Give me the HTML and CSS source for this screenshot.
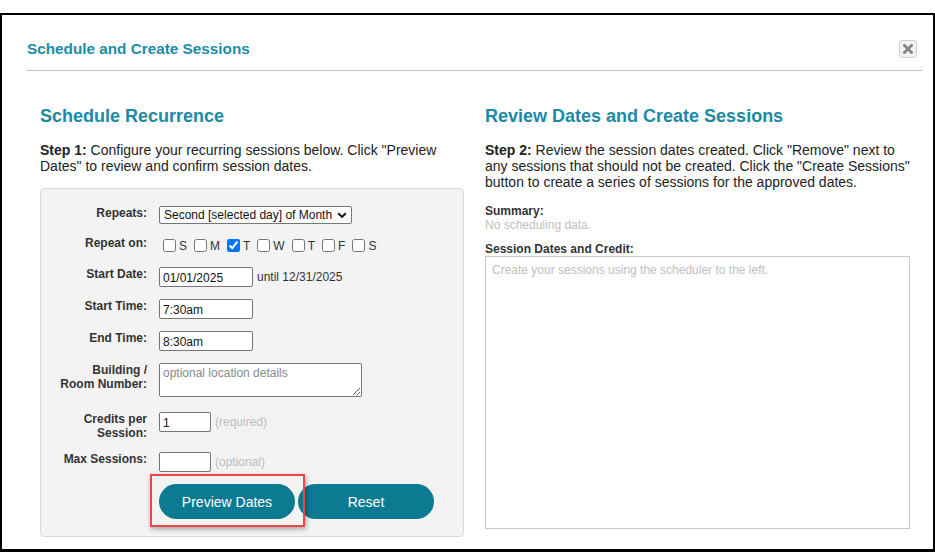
FILE: index.html
```html
<!DOCTYPE html>
<html>
<head>
<meta charset="utf-8">
<link rel="stylesheet" href="styles.css">
</head>
<body>
<div class="frame">
  <div class="modal-header">
    <div class="modal-title">Schedule and Create Sessions</div>
    <button class="close-btn" aria-label="Close">
      <svg width="10" height="10" viewBox="0 0 10 10"><path d="M1.5 1.5 L8.5 8.5 M8.5 1.5 L1.5 8.5" stroke="#858585" stroke-width="2.8" stroke-linecap="square"/></svg>
    </button>
  </div>
  <div class="columns">
    <div class="col col-left">
      <h2 class="col-heading">Schedule Recurrence</h2>
      <p class="step"><b>Step 1:</b> Configure your recurring sessions below. Click "Preview Dates" to review and confirm session dates.</p>
      <div class="panel">
        <div class="row">
          <label class="lbl">Repeats:</label>
          <div class="ctl">
            <div class="select-wrap">
              <select class="select"><option>Second [selected day] of Month</option></select>
              <svg class="chev" width="10" height="7" viewBox="0 0 10 7"><path d="M1.2 1.3 L5 5 L8.8 1.3" fill="none" stroke="#111" stroke-width="1.9"/></svg>
            </div>
          </div>
        </div>
        <div class="row row-days">
          <label class="lbl">Repeat on:</label>
          <div class="ctl days">
            <span class="day"><input type="checkbox"><span>S</span></span>
            <span class="day"><input type="checkbox"><span>M</span></span>
            <span class="day"><input type="checkbox" checked><span>T</span></span>
            <span class="day"><input type="checkbox"><span>W</span></span>
            <span class="day"><input type="checkbox"><span>T</span></span>
            <span class="day"><input type="checkbox"><span>F</span></span>
            <span class="day"><input type="checkbox"><span>S</span></span>
          </div>
        </div>
        <div class="row">
          <label class="lbl">Start Date:</label>
          <div class="ctl"><input class="txt txt-md" type="text" value="01/01/2025"><span class="after">until 12/31/2025</span></div>
        </div>
        <div class="row">
          <label class="lbl">Start Time:</label>
          <div class="ctl"><input class="txt txt-md" type="text" value="7:30am"></div>
        </div>
        <div class="row">
          <label class="lbl">End Time:</label>
          <div class="ctl"><input class="txt txt-md" type="text" value="8:30am"></div>
        </div>
        <div class="row row-area">
          <label class="lbl">Building /<br>Room Number:</label>
          <div class="ctl"><textarea class="area" placeholder="optional location details"></textarea></div>
        </div>
        <div class="row">
          <label class="lbl">Credits per<br>Session:</label>
          <div class="ctl"><input class="txt txt-sm" type="text" value="1"><span class="hint">(required)</span></div>
        </div>
        <div class="row">
          <label class="lbl">Max Sessions:</label>
          <div class="ctl"><input class="txt txt-sm" type="text" value=""><span class="hint">(optional)</span></div>
        </div>
        <div class="buttons">
          <div class="highlight-wrap">
            <button class="btn">Preview Dates</button>
            <span class="highlight"></span>
          </div>
          <button class="btn">Reset</button>
        </div>
      </div>
    </div>
    <div class="col col-right">
      <h2 class="col-heading">Review Dates and Create Sessions</h2>
      <p class="step"><b>Step 2:</b> Review the session dates created. Click "Remove" next to any sessions that should not be created. Click the "Create Sessions" button to create a series of sessions for the approved dates.</p>
      <div class="sub-label">Summary:</div>
      <div class="muted">No scheduling data.</div>
      <div class="sub-label sub-label-dates">Session Dates and Credit:</div>
      <div class="dates-box">
        <div class="muted">Create your sessions using the scheduler to the left.</div>
      </div>
    </div>
  </div>
</div>
</body>
</html>
```
FILE: styles.css
```css
html, body {
  margin: 0;
  padding: 0;
  background: #fff;
}
body {
  font-family: "Liberation Sans", Arial, sans-serif;
  color: #222;
  overflow: hidden;
}
.frame {
  margin-top: 13px;
  height: 539px;
  box-sizing: border-box;
  border: 2px solid #000;
  border-bottom-width: 3px;
  padding: 0 11px 0 25px;
}
.modal-header {
  display: flex;
  align-items: center;
  justify-content: space-between;
  padding: 25px 0 12px;
  border-bottom: 1px solid #c4c4c4;
}
.modal-title {
  font-size: 15.3px;
  line-height: 16px;
  font-weight: bold;
  color: #1b8ca7;
}
.close-btn {
  width: 18px;
  height: 18px;
  margin-right: 5px;
  padding: 0;
  border: 1px solid #cfcfcf;
  border-radius: 3px;
  background: #f2f2f2;
  display: flex;
  align-items: center;
  justify-content: center;
}
.columns {
  display: flex;
  gap: 21px;
  padding: 34px 0 0 13px;
}
.col-left { width: 424px; }
.col-right { width: 425px; }
.col-heading {
  margin: 0;
  font-size: 18px;
  line-height: 22px;
  font-weight: bold;
  color: #1a8aa5;
}
.step {
  margin: 15px 0 0;
  font-size: 14px;
  line-height: 16px;
  color: #222;
}
.panel {
  margin-top: 14px;
  height: 349px;
  box-sizing: border-box;
  background: #f3f3f3;
  border: 1px solid #dadada;
  border-radius: 4px;
  padding-top: 17px;
}
.row {
  display: grid;
  grid-template-columns: 106px 1fr;
  column-gap: 12px;
  align-items: start;
  margin-bottom: 12px;
}
.row-days { margin-bottom: 14px; }
.row-area { margin-bottom: 15px; }
.lbl {
  text-align: right;
  font-size: 12px;
  line-height: 14px;
  font-weight: bold;
  color: #333;
}
.ctl {
  display: flex;
  align-items: center;
  font-size: 12px;
}
.select-wrap {
  position: relative;
  width: 193px;
  height: 18px;
}
.select {
  appearance: none;
  -webkit-appearance: none;
  width: 193px;
  height: 18px;
  box-sizing: border-box;
  border: 1px solid #767676;
  border-radius: 2px;
  background: #fff;
  font-family: "Liberation Sans", Arial, sans-serif;
  font-size: 12px;
  line-height: 16px;
  padding: 0 0 0 4px;
  color: #111;
}
.chev {
  position: absolute;
  right: 5px;
  top: 6px;
  pointer-events: none;
}
.days {
  padding-top: 1px;
}
.day {
  display: inline-flex;
  align-items: center;
  margin-right: 3px;
  font-size: 12px;
  color: #333;
}
.day input {
  width: 13px;
  height: 13px;
  margin: 0 3px 0 4px;
}
.day span { padding-top: 2px; }
.txt {
  height: 20px;
  box-sizing: border-box;
  border: 1px solid #767676;
  border-radius: 2px;
  background: #fff;
  font-family: "Liberation Sans", Arial, sans-serif;
  font-size: 12px;
  padding: 1px 3px 0;
  color: #111;
  margin: 0;
}
.txt-md { width: 94px; }
.txt-sm { width: 52px; }
.after {
  margin-left: 4px;
  font-size: 12px;
  color: #333;
}
.hint {
  margin-left: 4px;
  font-size: 12px;
  color: #bdbdbd;
}
.area {
  width: 203px;
  height: 34px;
  box-sizing: border-box;
  border: 1px solid #767676;
  border-radius: 2px;
  font-family: "Liberation Sans", Arial, sans-serif;
  font-size: 12px;
  padding: 2px 3px;
  margin: 0;
  resize: vertical;
}
.area::placeholder { color: #8a8a8a; }
.buttons {
  display: flex;
  gap: 3px;
  padding-left: 118px;
  margin-top: 1px;
}
.highlight-wrap { position: relative; }
.btn {
  width: 136px;
  height: 35px;
  border: none;
  border-radius: 18px;
  background: #0c7b91;
  color: #fff;
  font-family: "Liberation Sans", Arial, sans-serif;
  font-size: 14px;
  padding: 0;
}
.highlight {
  position: absolute;
  left: -9px;
  top: -10px;
  width: 155px;
  height: 53px;
  box-sizing: border-box;
  border: 2px solid #ec4646;
  box-shadow: 1px 2px 5px rgba(0,0,0,0.35);
  pointer-events: none;
}
.sub-label {
  margin-top: 14px;
  font-size: 12px;
  line-height: 14px;
  font-weight: bold;
  color: #333;
}
.sub-label-dates { margin-top: 10px; }
.muted {
  font-size: 12px;
  line-height: 14px;
  color: #c0c0c0;
}
.dates-box {
  margin-top: 0;
  height: 273px;
  box-sizing: border-box;
  border: 1px solid #c8c8c8;
  padding: 6px 6px;
}
```
